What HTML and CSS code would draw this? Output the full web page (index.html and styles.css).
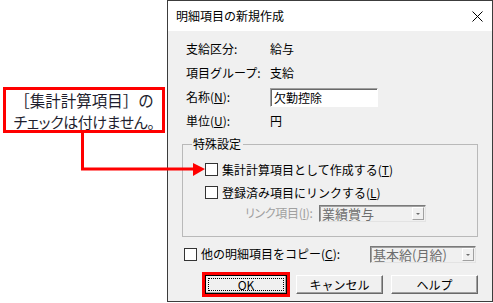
FILE: index.html
```html
<!DOCTYPE html>
<html lang="ja">
<head>
  <meta charset="UTF-8">
  <title>明細項目の新規作成</title>
  <link rel="stylesheet" href="styles.css">
</head>
<body>
  <div class="page">
    <!-- 吹き出し -->
    <div class="note-col">
      <div class="note">
        <div class="note-line">［集計計算項目］の</div>
        <div class="note-line tight">チェックは付けません。</div>
      </div>
    </div>

    <!-- ダイアログ -->
    <div class="dialog">
      <div class="title-bar">
        <span class="title">明細項目の新規作成</span>
        <svg class="close" width="11" height="11" viewBox="0 0 11 11">
          <path d="M0.5 0.5 L10.5 10.5 M10.5 0.5 L0.5 10.5" stroke="#000" stroke-width="1" fill="none"/>
        </svg>
      </div>

      <div class="info">
        <span>支給区分:</span><span>給与</span>
        <span>項目グループ:</span><span>支給</span>
        <span>名称(<u>N</u>):</span><span class="input">欠勤控除</span>
        <span>単位(<u>U</u>):</span><span>円</span>
      </div>

      <fieldset class="group">
        <legend>特殊設定</legend>
        <div class="check-list">
          <div class="check"><span class="box"></span><span>集計計算項目として作成する(<u>T</u>)</span></div>
          <div class="check"><span class="box"></span><span>登録済み項目にリンクする(<u>L</u>)</span></div>
          <div class="link-row">
            <span class="link-label">リンク項目(<u>I</u>):</span>
            <div class="combo link-combo">
              <span class="combo-text">業績賞与</span>
              <span class="drop"></span>
            </div>
          </div>
        </div>
      </fieldset>

      <div class="copy-row">
        <span class="box"></span>
        <span class="copy-label">他の明細項目をコピー(<u>C</u>):</span>
        <div class="combo copy-combo">
          <span class="combo-text">基本給(月給)</span>
          <span class="drop"></span>
        </div>
      </div>

      <div class="buttons">
        <div class="btn ok"><span class="focus">OK</span></div>
        <div class="btn cancel">キャンセル</div>
        <div class="btn help">ヘルプ</div>
      </div>
    </div>

    <!-- 矢印 -->
    <svg class="arrow" width="493" height="303" viewBox="0 0 493 303">
      <polyline points="82.5,133 82.5,169 196,169" stroke="#f00" stroke-width="3" fill="none"/>
      <polygon points="193,163 205,169 193,176" fill="#f00"/>
    </svg>
  </div>
</body>
</html>
```

FILE: styles.css
```css
html, body {
  margin: 0;
  padding: 0;
  width: 493px;
  height: 303px;
  overflow: hidden;
  background: #fff;
}

.page {
  position: relative;
  display: flex;
  width: 493px;
  height: 303px;
  font-family: "Noto Sans CJK JP", sans-serif;
  color: #000;
}

u {
  text-decoration: underline;
  text-underline-offset: 1px;
}

/* 吹き出し */
.note-col {
  width: 167px;
  flex: none;
}

.note {
  box-sizing: border-box;
  width: 162px;
  height: 46px;
  margin: 87px 0 0 3px;
  border: 3px solid #f00;
  background: #fff;
  text-align: center;
  font-size: 15.5px;
  line-height: 21px;
  color: #1e1e2e;
  white-space: nowrap;
}

.note-line.tight {
  font-size: 15px;
  font-feature-settings: "palt";
  letter-spacing: -0.4px;
}

.arrow {
  position: absolute;
  top: 0;
  left: 0;
  pointer-events: none;
}

/* ダイアログ */
.dialog {
  box-sizing: border-box;
  width: 326px;
  height: 302px;
  border: 1px solid #3c3c3c;
  background: #f0f0f0;
  font-size: 12px;
  line-height: 16px;
  display: flex;
  flex-direction: column;
  white-space: nowrap;
}

.title-bar {
  height: 30px;
  background: #fff;
  display: flex;
  align-items: center;
  justify-content: space-between;
  padding: 0 9px 0 8px;
  flex: none;
}

.close {
  margin-top: 1px;
}

.info {
  display: grid;
  grid-template-columns: 84px auto;
  grid-auto-rows: 24px;
  align-items: center;
  margin: 6px 0 0 18px;
}

.input {
  box-sizing: border-box;
  width: 108px;
  height: 19px;
  background: #fff;
  border: 1px solid;
  border-color: #a0a0a0 #fff #fff #a0a0a0;
  box-shadow: inset 1px 1px 0 #696969;
  padding-left: 3px;
  line-height: 17px;
}

/* グループ */
.group {
  box-sizing: border-box;
  width: 296px;
  height: 99px;
  margin: 5px 0 0 14px;
  padding: 0 0 0 9px;
  border: 1px solid #b9b9b9;
  min-width: 0;
}

.group legend {
  padding: 0 2px 0 1px;
  line-height: 12px;
}

.check-list {
  margin: 8px 0 0 13px;
  display: flex;
  flex-direction: column;
}

.check {
  display: flex;
  align-items: center;
  gap: 4px;
  height: 23px;
}

.box {
  box-sizing: border-box;
  width: 13px;
  height: 13px;
  background: #fff;
  border: 1px solid #333;
  flex: none;
}

.link-row {
  display: flex;
  align-items: center;
  height: 18px;
  margin-left: 40px;
}

.link-label {
  width: 74px;
  flex: none;
  color: #a0a0a0;
  font-feature-settings: "palt";
  letter-spacing: -0.3px;
}

.combo {
  box-sizing: border-box;
  height: 17px;
  display: flex;
  align-items: center;
  justify-content: space-between;
  background: #f0f0f0;
  border: 1px solid;
  border-color: #7a7a7a #e3e3e3 #e3e3e3 #7a7a7a;
  box-shadow: inset 1px 1px 0 #a0a0a0;
  padding: 0 1px 0 2px;
  flex: none;
}

.combo-text {
  color: #6d6d6d;
  font-size: 13px;
  line-height: 15px;
}

.drop {
  box-sizing: border-box;
  width: 12px;
  height: 13px;
  border: 1px solid #a0a0a0;
  border-color: #fff #a0a0a0 #a0a0a0 #fff;
  background: #f0f0f0;
  position: relative;
}

.drop::after {
  content: "";
  position: absolute;
  left: 3px;
  top: 5px;
  border-left: 2px solid transparent;
  border-right: 2px solid transparent;
  border-top: 2px solid #6d6d6d;
}

.link-combo {
  width: 107px;
}

/* コピー行 */
.copy-row {
  display: flex;
  align-items: center;
  height: 24px;
  margin: 5px 16px 0 16px;
}

.copy-label {
  flex: 1;
  margin-left: 4px;
}

.copy-combo {
  width: 106px;
}

/* ボタン */
.buttons {
  display: flex;
  margin: 9px 0 0 37px;
}

.btn {
  box-sizing: border-box;
  height: 19px;
  width: 87px;
  display: flex;
  align-items: center;
  justify-content: center;
  background: #f0f0f0;
  border: 1px solid;
  border-color: #fff #696969 #696969 #fff;
  box-shadow: inset -1px -1px 0 #a0a0a0;
  line-height: 15px;
}

.btn.ok {
  width: 82px;
  padding: 2px;
  outline: 3px solid #f00;
  border-color: #000;
}

.focus {
  box-sizing: border-box;
  width: 100%;
  height: 100%;
  border: 1px dotted #000;
  display: flex;
  align-items: center;
  justify-content: center;
  line-height: 11px;
}

.btn.cancel {
  margin-left: 9px;
}

.btn.help {
  margin-left: 8px;
}
```
